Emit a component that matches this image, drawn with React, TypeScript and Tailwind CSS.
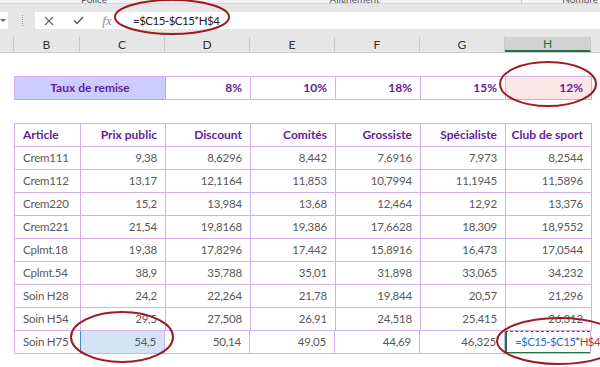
import React from 'react';

const font = { fontFamily: 'Lato, "Open Sans", sans-serif' };

const cols = ['B', 'C', 'D', 'E', 'F', 'G', 'H'];
const widths = ['w-[66px]', 'w-[85px]', 'w-[85px]', 'w-[85px]', 'w-[85px]', 'w-[85px]', 'w-[86px]'];

const headers = ['Article', 'Prix public', 'Discount', 'Comités', 'Grossiste', 'Spécialiste', 'Club de sport'];

const rows: string[][] = [
  ['Crem111', '9,38', '8,6296', '8,442', '7,6916', '7,973', '8,2544'],
  ['Crem112', '13,17', '12,1164', '11,853', '10,7994', '11,1945', '11,5896'],
  ['Crem220', '15,2', '13,984', '13,68', '12,464', '12,92', '13,376'],
  ['Crem221', '21,54', '19,8168', '19,386', '17,6628', '18,309', '18,9552'],
  ['Cplmt.18', '19,38', '17,8296', '17,442', '15,8916', '16,473', '17,0544'],
  ['Cplmt.54', '38,9', '35,788', '35,01', '31,898', '33,065', '34,232'],
  ['Soin H28', '24,2', '22,264', '21,78', '19,844', '20,57', '21,296'],
  ['Soin H54', '29,5', '27,508', '26,91', '24,518', '25,415', '26,312'],
  ['Soin H75', '54,5', '50,14', '49,05', '44,69', '46,325', ''],
];

const rates = ['8%', '10%', '18%', '15%', '12%'];

// --- Chrome ---

const RibbonStrip: React.FC = () => (
  <div className="h-[4px] bg-[#f3f3f3] border-b border-[#d6d6d6] overflow-hidden flex text-[10px] text-[#555] leading-none whitespace-nowrap">
    <div className="w-[188px] text-center -mt-[6px]">Police</div>
    <div className="w-[333px] text-center -mt-[6px]">Alignement</div>
    <div className="w-px bg-[#cfcfcf]" />
    <div className="flex-1 text-right pr-[2px] -mt-[6px]">Nombre</div>
  </div>
);

const FormulaBar: React.FC = () => (
  <div className="bg-[#e6e6e6] pt-[8px] pb-[8px]">
    <div className="h-[17px] flex items-center">
      <div className="w-[8px] h-full bg-white flex items-center">
        <svg width="6" height="4" viewBox="0 0 6 4">
          <path d="M0 0 L6 0 L3 3 Z" fill="#666" />
        </svg>
      </div>
      <div className="w-[14px]" />
      <div className="h-[11px] border-l border-dotted border-[#9a9a9a]" />
      <div className="w-[12px]" />
      <div className="flex-1 h-full bg-white flex items-center text-[#222] whitespace-nowrap">
        <div className="w-[28px] flex justify-center">
          <svg width="10" height="10" viewBox="0 0 10 10">
            <path d="M1 1 L9 9 M9 1 L1 9" stroke="#666" strokeWidth="1.1" />
          </svg>
        </div>
        <div className="w-[30px] flex justify-center">
          <svg width="11" height="9" viewBox="0 0 11 9">
            <path d="M1 4.5 L4 7.5 L10 1" stroke="#555" strokeWidth="1.3" fill="none" />
          </svg>
        </div>
        <div className="w-[28px] text-center italic text-[#888] text-[13px]" style={{ fontFamily: '"Liberation Serif", serif' }}>
          fx
        </div>
        <div className="ml-[12px] text-[11.5px] tracking-[-0.5px]">=$C15-$C15*H$4</div>
      </div>
    </div>
  </div>
);

const ColumnHeaders: React.FC = () => (
  <div className="h-[16px] bg-[#e6e6e6] border-b border-[#cdcdcd] flex text-[12px] text-[#333]">
    <div className="w-[14px] border-r border-[#c8c8c8]" />
    {cols.map((c, i) => (
      <div
        key={c}
        className={`${widths[i]} flex items-center justify-center border-r border-[#c8c8c8] ${
          c === 'H' ? 'bg-[#d2d2d2] text-[#217346] border-b-2 border-b-[#217346]' : ''
        }`}
      >
        {c}
      </div>
    ))}
    <div className="flex-1" />
  </div>
);

// --- Sheet ---

const Cell: React.FC<{ w: string; className?: string; children?: React.ReactNode }> = ({ w, className = '', children }) => (
  <div className={`${w} h-[23px] border-r border-b border-[#d3b2ec] flex items-center px-[8px] whitespace-nowrap ${className}`}>
    {children}
  </div>
);

const RateRow: React.FC = () => (
  <div className="flex pl-[14px]">
    <div className="flex border-l border-t border-[#d3b2ec] text-[12px]">
      <div className="w-[151px] h-[23px] bg-[#ccccff] border-r border-b border-[#b7a6e6] flex items-center justify-center font-bold text-[#641c9c]">
        Taux de remise
      </div>
      {rates.map((r, i) => (
        <Cell
          key={r}
          w={widths[i + 2]}
          className={`justify-end font-bold text-[#641c9c] ${i === 4 ? 'bg-[#fde6e6] border-[#e5a9ad]' : ''}`}
        >
          {r}
        </Cell>
      ))}
    </div>
  </div>
);

const DataTable: React.FC = () => (
  <div className="flex pl-[14px]">
    <div className="flex flex-col border-l border-t border-[#d3b2ec]">
      <div className="flex font-bold text-[12px] text-[#641c9c]">
        {headers.map((h, i) => (
          <Cell key={h} w={widths[i]} className={i === 0 ? '' : 'justify-end'}>
            {h}
          </Cell>
        ))}
      </div>
      {rows.map((row, r) => (
        <div key={row[0]} className="flex text-[11.5px] tracking-[-0.2px] text-[#595959]">
          {row.map((v, i) => {
            const isSel = r === 8 && i === 1;
            const isEdit = r === 8 && i === 6;
            if (isEdit) {
              return (
                <div key={i} className={`${widths[i]} h-[23px] border-b border-r border-[#d3b2ec] relative`}>
                  <div className="absolute inset-0 border-t border-dashed border-[#217346]" />
                  <div className="absolute left-0 top-0 bottom-0 w-[2px] bg-[#217346]" />
                  <div className="absolute left-0 right-0 bottom-0 h-px bg-[#217346]" />
                  <div className="absolute left-[10px] top-0 h-full flex items-center whitespace-nowrap text-[11.5px] tracking-[-0.6px]">
                    <span className="text-[#2f6fd1]">=$C15-$C15</span>
                    <span className="text-[#444]">*</span>
                    <span className="text-[#c0393f]">H$4</span>
                  </div>
                </div>
              );
            }
            return (
              <Cell
                key={i}
                w={widths[i]}
                className={`${i === 0 ? '' : 'justify-end'} ${
                  isSel ? 'bg-[#d3e2f4] border-[#4a86d6] border-l border-l-[#4a86d6] -ml-px' : ''
                }`}
              >
                {v}
              </Cell>
            );
          })}
        </div>
      ))}
    </div>
  </div>
);

const Annotations: React.FC = () => (
  <svg className="absolute inset-0 pointer-events-none" width="600" height="367" viewBox="0 0 600 367">
    <g fill="none" stroke="#9e1b24" strokeWidth="2">
      <ellipse cx="172" cy="17" rx="57" ry="17" />
      <ellipse cx="548" cy="84" rx="48" ry="22" />
      <ellipse cx="122" cy="337" rx="51" ry="25" />
      <ellipse cx="559" cy="341" rx="62" ry="23" />
    </g>
  </svg>
);

export default function App() {
  return (
    <div className="relative w-[600px] h-[367px] overflow-hidden bg-white" style={font}>
      <RibbonStrip />
      <FormulaBar />
      <ColumnHeaders />
      <div className="h-[23px]" />
      <RateRow />
      <div className="h-[23px]" />
      <DataTable />
      <Annotations />
    </div>
  );
}
